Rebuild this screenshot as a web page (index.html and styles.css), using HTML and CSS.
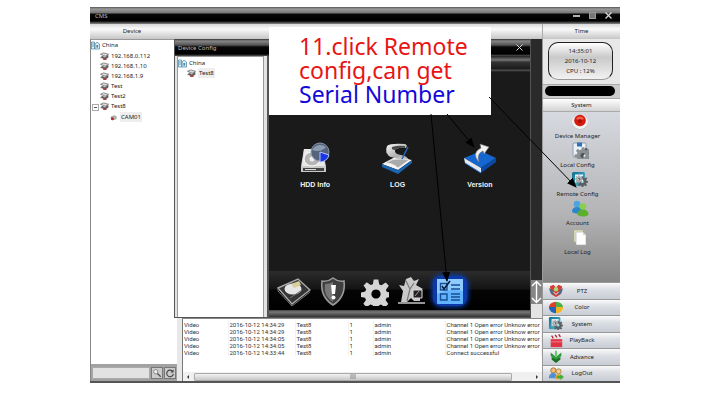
FILE: index.html
```html
<!DOCTYPE html>
<html lang="en">
<head>
    <meta charset="UTF-8">
    <meta name="viewport" content="width=device-width, initial-scale=1.0">
    <title>CMS</title>
    <link rel="stylesheet" href="styles.css">
</head>
<body>
    <!-- shared icons -->
    <svg class="defs" aria-hidden="true">
        <defs>
            <linearGradient id="metal" x1="0" y1="0" x2="1" y2="1">
                <stop offset="0" stop-color="#fafafa"/>
                <stop offset="1" stop-color="#8d8d8d"/>
            </linearGradient>
            <linearGradient id="teal" x1="0" y1="0" x2="1" y2="1">
                <stop offset="0" stop-color="#0c6c8e"/>
                <stop offset="1" stop-color="#5cc3d8"/>
            </linearGradient>
        </defs>
        <symbol id="i-dvr" viewBox="0 0 10 9">
            <path d="M0.5 2L4 0.5L9.5 2L6 4.2Z" fill="#ddd" stroke="#555" stroke-width="0.7"/>
            <path d="M2 4L5.5 5.5L9 3.2V5.6L5.5 7.6L2 6Z" fill="#666" stroke="#333" stroke-width="0.5"/>
            <path d="M0.5 5.8H3" stroke="#666"/>
            <rect x="3.6" y="6.6" width="3.6" height="1.8" fill="#b43a3a"/>
        </symbol>
        <symbol id="i-root" viewBox="0 0 9 9">
            <path d="M0.5 1H3.5V8H0.5ZM4 3L6 1.2L8.5 3V8H4Z" fill="#dff0f7" stroke="#4b8eae" stroke-width="0.8"/>
            <path d="M1.3 3H2.7M1.3 5H2.7M5.2 5H7.3M6.2 4V7" stroke="#27617e" stroke-width="0.8"/>
        </symbol>
        <symbol id="i-gear" viewBox="0 0 26 26">
            <path fill-rule="evenodd" d="M11 0.5h4l0.8 4.2 2 0.8L21.4 3l2.7 2.8-2.5 3.5 0.7 1.8 3.7 0.6v3.8l-3.8 0.8-0.9 2 2.4 3.4-2.9 2.8-3.5-2.4-1.8 0.8-0.8 3.6h-3.8l-0.7-3.7-2-0.8-3.4 2.4L2 21.5l2.3-3.4-0.8-1.9-3.5-0.7v-3.9l3.7-0.7 0.8-2L2.2 5.6 5 2.8l3.4 2.5 1.9-0.8zM13 9a4 4 0 1 0 0.01 0z"/>
        </symbol>
        <symbol id="i-sysconf" viewBox="0 0 18 17">
            <rect x="1" y="1" width="13" height="14" rx="1.5" fill="url(#teal)"/>
            <rect x="4" y="3.5" width="8" height="8" fill="#e6f5f9"/>
            <svg x="6" y="5" width="11" height="11"><use href="#i-gear" fill="#5b5f62"/></svg>
            <svg x="4" y="4" width="8" height="8"><use href="#i-gear" fill="#a8adb0"/></svg>
        </symbol>
        <marker id="tip" viewBox="0 0 10 8" refX="9" refY="4" markerWidth="10" markerHeight="8" markerUnits="userSpaceOnUse" orient="auto">
            <path d="M0 0L10 4L0 8Z"/>
        </marker>
    </svg>

    <div class="app">
        <header class="titlebar">
            <span class="app-name">CMS</span>
            <div class="window-btns">
                <button aria-label="Minimize"><svg viewBox="0 0 9 9"><path d="M1 5H8" stroke="#ddd" stroke-width="1.6"/></svg></button>
                <button aria-label="Maximize"><svg viewBox="0 0 9 9"><rect x="1.5" y="1.5" width="6" height="6" fill="#777" stroke="#999"/></svg></button>
                <button aria-label="Close"><svg viewBox="0 0 9 9"><path d="M1.5 1.5L7.5 7.5M7.5 1.5L1.5 7.5" stroke="#ddd" stroke-width="1.2"/></svg></button>
            </div>
        </header>

        <div class="headings">
            <h2>Device</h2>
            <h2>Time</h2>
        </div>

        <div class="body">
            <aside class="devices">
                <div class="tree-box">
                    <ul class="tree">
                        <li><span class="node"><svg><use href="#i-root"/></svg>China</span>
                            <ul>
                                <li><span class="node"><svg><use href="#i-dvr"/></svg>192.168.0.112</span></li>
                                <li><span class="node"><svg><use href="#i-dvr"/></svg>192.168.1.10</span></li>
                                <li><span class="node"><svg><use href="#i-dvr"/></svg>192.168.1.9</span></li>
                                <li><span class="node"><svg><use href="#i-dvr"/></svg>Test</span></li>
                                <li><span class="node"><svg><use href="#i-dvr"/></svg>Test2</span></li>
                                <li class="open"><span class="node"><svg><use href="#i-dvr"/></svg>Test8</span>
                                    <ul>
                                        <li><span class="node"><svg viewBox="0 0 10 9"><path d="M2 4L6 2.5L8 3.5L8 6L4 7Z" fill="#bbb" stroke="#777" stroke-width="0.6"/><circle cx="3.8" cy="5.8" r="1.7" fill="#b02a2a"/></svg><span class="selected">CAM01</span></span></li>
                                    </ul>
                                </li>
                            </ul>
                        </li>
                    </ul>
                </div>
                <div class="search">
                    <input type="text" aria-label="Search device">
                    <button aria-label="Search"><svg viewBox="0 0 12 12"><circle cx="4.5" cy="4.5" r="2.6" fill="#eee" stroke="#777"/><path d="M6.5 6.5L10.5 10.5" stroke="#555" stroke-width="1.6"/></svg></button>
                    <button aria-label="Refresh"><svg viewBox="0 0 12 12"><path d="M9.3 4.2A4 4 0 1 0 10 7" fill="none" stroke="#444" stroke-width="1.3"/><path d="M10.3 1.6V5.4H6.5Z" fill="#444"/></svg></button>
                </div>
            </aside>

            <main class="workspace">
                <div class="stage">
                    <section class="dialog">
                        <div class="dialog-title">
                            <span>Device Config</span>
                            <button aria-label="Close dialog"><svg viewBox="0 0 9 9"><path d="M1.5 1.5L7.5 7.5M7.5 1.5L1.5 7.5" stroke="#ddd"/></svg></button>
                        </div>
                        <div class="dialog-body">
                            <div class="dialog-tree">
                                <ul class="tree">
                                    <li><span class="node"><svg><use href="#i-root"/></svg>China</span>
                                        <ul>
                                            <li><span class="node"><svg><use href="#i-dvr"/></svg><span class="selected">Test8</span></span></li>
                                        </ul>
                                    </li>
                                </ul>
                            </div>
                            <div class="config">
                                <div class="config-head"></div>
                                <div class="config-items">
                                    <button>
                                        <svg viewBox="0 0 32 32">
                                            <path d="M5 7H23L27 24V30H2V24Z" fill="#c9c9c9"/>
                                            <path d="M5 7H23L26 24H3Z" fill="#e9e9e9"/>
                                            <ellipse cx="13" cy="17" rx="8" ry="7" fill="#b5b5b5" stroke="#fff"/>
                                            <circle cx="13" cy="17" r="2.5" fill="#eee"/>
                                            <path d="M4 26H25V29H4Z" fill="#444"/>
                                            <path d="M6 27.5H17" stroke="#ddd"/>
                                            <circle cx="21" cy="10" r="9" fill="#54647c" stroke="#8795a9"/>
                                            <path d="M13 8Q19 0 27 5Q22 11 13 8Z" fill="#8c9bb0"/>
                                            <path d="M21 10L30 13A9 9 0 0 1 21 20Z" fill="#1837e0" stroke="#b7c3ff"/>
                                        </svg>
                                        HDD Info
                                    </button>
                                    <button>
                                        <svg viewBox="0 0 32 32">
                                            <path d="M1 22L14 15L31 18L17 28Z" fill="#f4f4f4"/>
                                            <path d="M1 22L17 28L31 18V21L17 32L1 25Z" fill="#1c65b0"/>
                                            <path d="M6 5Q3 12 10 14L20 13Q26 14 28 18L17 25Q12 20 5 21Q8 17 17 17L11 15Q4 14 6 5Z" fill="#b9b9b9"/>
                                            <path d="M6 4Q9 1 24 2Q27 3 25 6Q17 5 14 8Q13 12 20 13Q12 17 8 14Q4 10 6 4Z" fill="url(#metal)"/>
                                            <path d="M11 5Q17 3 24 4L24 6Q17 5 14 8Q10 8 11 5Z" fill="#4b4b4b"/>
                                            <path d="M4 21Q12 16 20 17Q26 17 28 18L17 26Q12 21 4 21Z" fill="#aaa" stroke="#eee" stroke-width="0.8"/>
                                            <path d="M27 5L21 17" stroke="#2868b5" stroke-width="1.6"/>
                                        </svg>
                                        LOG
                                    </button>
                                    <button>
                                        <svg viewBox="0 0 32 32">
                                            <path d="M0 16L17 9L32 16L17 26Z" fill="#1566cf"/>
                                            <path d="M0 16L17 26V31L1 21Z" fill="#e5e9ee"/>
                                            <path d="M17 26L32 16V20L17 31Z" fill="#0b49a5"/>
                                            <path d="M1 21L17 31" stroke="#2277dd"/>
                                            <path d="M15 20Q7 11 17 6L16 2L25 5L20 12L19 9Q12 12 15 20Z" fill="#f2f2f2" stroke="#777" stroke-width="0.6"/>
                                        </svg>
                                        Version
                                    </button>
                                </div>
                                <nav class="config-tabs">
                                    <button aria-label="Storage">
                                        <svg viewBox="0 0 34 30">
                                            <path d="M1 12L21 3L33 14L15 28Z" fill="#353535" stroke="#aaa" stroke-width="1.4"/>
                                            <path d="M1 12V15L15 30L33 16" fill="none" stroke="#777"/>
                                            <ellipse cx="16" cy="13" rx="8.5" ry="5.5" fill="#e6e6e6"/>
                                            <path d="M14 8L22 5L24 9L17 12Z" fill="#d9cf9c"/>
                                            <path d="M13 22L25 14" stroke="#777"/>
                                        </svg>
                                    </button>
                                    <button aria-label="Alarm">
                                        <svg viewBox="0 0 34 30">
                                            <path d="M6 5Q12 6 17 2Q22 6 28 5Q30 21 17 29Q4 21 6 5Z" fill="#3f3f3f" stroke="#999" stroke-width="1.6"/>
                                            <path d="M9 8Q14 8 17 6V26Q7 20 9 8Z" fill="#777"/>
                                            <path d="M15 9H20L19 18H16Z" fill="#fff"/>
                                            <circle cx="17.5" cy="21.5" r="2" fill="#fff"/>
                                        </svg>
                                    </button>
                                    <button aria-label="Settings">
                                        <svg viewBox="0 0 34 30"><svg x="4" y="3" width="25" height="25"><use href="#i-gear" fill="#d5d5d5"/></svg></svg>
                                    </button>
                                    <button aria-label="Tools">
                                        <svg viewBox="0 0 34 30">
                                            <path d="M4 27H31" stroke="#bbb" stroke-width="1.6"/>
                                            <path d="M7 26L9 15L5 9L10 10L12 3L17 1L20 5L25 3L22 9L29 13L26 15V25H20L17 22L13 26Z" fill="#c9c9c9"/>
                                            <path d="M12 5L16 13L13 25M20 7L16 13" fill="none" stroke="#777" stroke-width="1.2"/>
                                            <path d="M19 14H28V22H19Z" fill="#222" stroke="#ddd"/>
                                            <path d="M21 20L25 15" stroke="#999"/>
                                        </svg>
                                    </button>
                                    <button class="active" aria-label="Information">
                                        <svg viewBox="0 0 34 30">
                                            <rect x="4" y="3" width="26" height="25" rx="1" fill="#62b3ff"/>
                                            <path d="M4 3H30V15Q16 12 4 18Z" fill="#8fcbff"/>
                                            <path d="M7.5 7.5H14V14H7.5ZM7.5 18H14V24H7.5Z" fill="none" stroke="#174f93" stroke-width="1.4"/>
                                            <path d="M9 10L11 13L17 5" fill="none" stroke="#0b1d3b" stroke-width="1.6"/>
                                            <path d="M18 9H27M18 13H27M18 18H27M18 21H27M18 24H27" stroke="#174f93" stroke-width="1.4"/>
                                        </svg>
                                    </button>
                                </nav>
                                <div class="config-foot"></div>
                            </div>
                        </div>
                    </section>
                    <div class="pager">
                        <button aria-label="Scroll up"><svg viewBox="0 0 11 12"><path d="M5.5 12V1.5M1 6L5.5 1.5L10 6" fill="none" stroke="#fff" stroke-width="1.4"/></svg></button>
                        <button aria-label="Scroll down"><svg viewBox="0 0 11 12"><path d="M5.5 0V10.5M1 6L5.5 10.5L10 6" fill="none" stroke="#fff" stroke-width="1.4"/></svg></button>
                        <div class="pager-end"></div>
                    </div>
                </div>

                <div class="log">
                    <table>
                        <colgroup><col class="c-type"><col class="c-time"><col class="c-device"><col class="c-channel"><col class="c-user"><col></colgroup>
                        <tbody>
                            <tr><td>Video</td><td>2016-10-12 14:34:29</td><td>Test8</td><td>1</td><td>admin</td><td>Channel 1 Open error Unknow error</td></tr>
                            <tr><td>Video</td><td>2016-10-12 14:34:29</td><td>Test8</td><td>1</td><td>admin</td><td>Channel 1 Open error Unknow error</td></tr>
                            <tr><td>Video</td><td>2016-10-12 14:34:05</td><td>Test8</td><td>1</td><td>admin</td><td>Channel 1 Open error Unknow error</td></tr>
                            <tr><td>Video</td><td>2016-10-12 14:34:05</td><td>Test8</td><td>1</td><td>admin</td><td>Channel 1 Open error Unknow error</td></tr>
                            <tr><td>Video</td><td>2016-10-12 14:33:44</td><td>Test8</td><td>1</td><td>admin</td><td>Connect successful</td></tr>
                        </tbody>
                    </table>
                    <div class="scrollbar">
                        <svg viewBox="0 0 4 6"><path d="M3 1L1 3L3 5Z" fill="#333"/></svg>
                        <div class="thumb"><svg viewBox="0 0 6 5"><path d="M1 0V5M3 0V5M5 0V5" stroke="#777" stroke-width="0.8"/></svg></div>
                        <svg viewBox="0 0 4 6"><path d="M1 1L3 3L1 5Z" fill="#333"/></svg>
                    </div>
                </div>
            </main>

            <aside class="side">
                <div class="clock-box">
                    <div class="clock">
                        <span>14:35:01</span>
                        <span>2016-10-12</span>
                        <span>CPU : 12%</span>
                    </div>
                </div>
                <div class="lamp"><div></div></div>
                <h2>System</h2>
                <div class="shortcuts">
                    <button>
                        <svg viewBox="0 0 18 17"><ellipse cx="9" cy="10.5" rx="8" ry="6" fill="#b8bcc0"/><ellipse cx="9" cy="9" rx="8" ry="7" fill="#f2f2f2"/><circle cx="9" cy="7.5" r="5.8" fill="#d41a0c"/><path d="M5 6A4.5 4.5 0 0 1 13 6Q9 8 5 6Z" fill="#f0604a"/><circle cx="9" cy="8" r="2" fill="#a80d05"/></svg>
                        Device Manager
                    </button>
                    <button>
                        <svg viewBox="0 0 18 17"><rect x="2" y="1" width="13" height="14" rx="1" fill="#eaf2f8" stroke="#8ca0b0"/><rect x="6" y="0.5" width="5" height="4" fill="#2f72b5"/><svg x="6" y="6" width="11" height="11"><use href="#i-gear" fill="#4e5356"/></svg><svg x="3" y="5" width="8" height="8"><use href="#i-gear" fill="#8b9093"/></svg></svg>
                        Local Config
                    </button>
                    <button>
                        <svg><use href="#i-sysconf"/></svg>
                        Remote Config
                    </button>
                    <button>
                        <svg viewBox="0 0 18 17"><circle cx="6" cy="4" r="3.3" fill="#4da5dd"/><path d="M1 12Q1 7 6 7Q11 7 11 12Q6 15 1 12Z" fill="#2c87c9"/><circle cx="12" cy="6.5" r="3.3" fill="#8ad04e"/><path d="M6.5 15Q6.5 9.5 12 9.5Q17.5 9.5 17.5 15Q12 18 6.5 15Z" fill="#5cb02d"/></svg>
                        Account
                    </button>
                    <button>
                        <svg viewBox="0 0 18 17"><path d="M3 1H12V13H3Z" fill="#e3e6c0" stroke="#a9ac88" stroke-width="0.6"/><path d="M5 3H12L15 6V16H5Z" fill="#fff" stroke="#aaa" stroke-width="0.6"/><path d="M12 3V6H15Z" fill="#d5d8b0"/></svg>
                        Local Log
                    </button>
                </div>
                <nav class="menu">
                    <button>
                        <svg viewBox="0 0 18 17"><path d="M2 4L6 2L9 5L12 2L16 4L14 13L9 16L4 13Z" fill="#d93b35"/><path d="M1 6L5 8L8 14L3 12ZM17 6L13 8L10 14L15 12Z" fill="#4f6a86"/><circle cx="9" cy="7" r="2.5" fill="#a8dc76"/><path d="M6 10L9 13L12 10" fill="none" stroke="#fff"/></svg>
                        <span>PTZ</span>
                    </button>
                    <button>
                        <svg viewBox="0 0 18 17"><path d="M9 8V2A8 6.5 0 0 1 17 8Z" fill="#4db044"/><path d="M9 8H17A8 6.5 0 0 1 9 15Z" fill="#f5b51e"/><path d="M9 8V15A8 6.5 0 0 1 1 8Z" fill="#2464bb"/><path d="M9 8H1A8 6.5 0 0 1 9 2Z" fill="#e0402a"/></svg>
                        <span>Color</span>
                    </button>
                    <button>
                        <svg><use href="#i-sysconf"/></svg>
                        <span>System</span>
                    </button>
                    <button>
                        <svg viewBox="0 0 18 17"><rect x="3" y="7" width="13" height="9" fill="#e03444"/><path d="M3 10H16" stroke="#f58b92"/><path d="M2 3L15 1L16 4L3 6.5Z" fill="#eee"/><path d="M4 3L6 6M8 2L10 5M12 1.5L14 4.5" stroke="#b51f2d" stroke-width="1.5"/></svg>
                        <span>PlayBack</span>
                    </button>
                    <button>
                        <svg viewBox="0 0 18 17"><path d="M3 4L9 9L15 4V8L9 13L3 8Z" fill="#2c9b36"/><path d="M4 9L9 12L14 9V12L9 16L4 12Z" fill="#1a6f27"/><path d="M8 2H10V8H8Z" fill="#57c45a"/></svg>
                        <span>Advance</span>
                    </button>
                    <button>
                        <svg viewBox="0 0 18 17"><circle cx="6" cy="5" r="3" fill="#f0bb77" stroke="#8a5a1e" stroke-width="0.8"/><path d="M1 14Q1 8 6 8Q10 8 10 14Z" fill="#4e8fd0"/><circle cx="12" cy="6" r="2.8" fill="#f5cf92" stroke="#a06c22" stroke-width="0.8"/><path d="M8 15Q8 9 12 9Q16 9 16 15Z" fill="#e2a838"/><path d="M10 11H14V9L18 12.5L14 16V14H10Z" fill="#3fae3b"/></svg>
                        <span>LogOut</span>
                    </button>
                </nav>
            </aside>
        </div>

        <div class="callout">11.click Remote<br>config,can get<br><em>Serial Number</em></div>
        <svg class="arrows" viewBox="0 0 530 376" aria-hidden="true">
            <path d="M357 107L384 140" marker-end="url(#tip)"/>
            <path d="M341 107L357 274" marker-end="url(#tip)"/>
            <path d="M399 90L486 180" marker-end="url(#tip)"/>
        </svg>
    </div>
</body>
</html>
```
FILE: styles.css
```css
* {
    margin: 0;
    padding: 0;
    box-sizing: border-box;
}

body {
    font-family: "Noto Sans", "Open Sans", sans-serif;
    font-size: 6px;
    line-height: 10px;
    color: #222;
    background: white;
    min-height: 100vh;
    padding: 7px 100px 32px 90px;
    display: flex;
}

button {
    border: none;
    background: none;
    font: inherit;
    color: inherit;
    cursor: pointer;
}

svg {
    display: block;
    flex: none;
}

ul {
    list-style: none;
}

h2 {
    font-size: 6px;
    font-weight: 400;
    text-align: center;
}

.defs {
    position: absolute;
    width: 0;
    height: 0;
}

.app {
    position: relative;
    flex: 1;
    display: flex;
    flex-direction: column;
    background: #e8e8e8;
    border-bottom: 2px solid #555;
}

/* title bar */
.titlebar {
    height: 17px;
    padding: 0 7px 0 5px;
    display: flex;
    justify-content: space-between;
    align-items: center;
    background: linear-gradient(#555 0, #999 2px, #777 6px, #080808 7px, #000 14px, #333 15px, #888 17px);
    color: #bbb;
}

.window-btns {
    display: flex;
    gap: 7px;
}

.window-btns svg,
.dialog-title svg {
    width: 9px;
    height: 9px;
}

.headings {
    display: grid;
    grid-template-columns: 84px 78px;
    justify-content: space-between;
    background: linear-gradient(#d8d8d8, #fafafa 5px, #c6c6c6);
    line-height: 15px;
}

.headings h2:last-child {
    border-left: 1px solid #aaa;
}

.body {
    flex: 1;
    display: grid;
    grid-template-columns: 87px 1fr 78px;
}

/* device list */
.devices {
    display: flex;
    flex-direction: column;
    background: #a2a2a2;
    border-left: 1px solid #888;
}

.tree-box {
    flex: 1;
    background: white;
    border-top: 1px solid #999;
}

.tree ul {
    padding: 1px 0 0 9px;
}

.tree li {
    position: relative;
}

.node {
    display: flex;
    align-items: center;
    gap: 2px;
}

.node svg {
    width: 9px;
    height: 9px;
}

.node .selected {
    background: #eee;
    padding: 0 1px;
}

.open::before {
    content: "";
    position: absolute;
    left: -8px;
    top: 3px;
    width: 5px;
    height: 5px;
    border: 1px solid #aaa;
    background: linear-gradient(#555, #555) center / 3px 1px no-repeat;
}

.search {
    height: 17px;
    padding: 3px 1px 2px;
    display: flex;
    gap: 1px;
}

.search input {
    flex: 1;
    min-width: 0;
    border: 1px solid #aaa;
    background: #e2e2e2;
}

.search button {
    width: 12px;
    background: #ccc;
    border: 1px solid #777;
}

.search svg {
    width: 10px;
    height: 10px;
}

/* workspace */
.workspace {
    min-width: 0;
    display: flex;
    flex-direction: column;
}

.stage {
    flex: 1;
    display: flex;
    background: #1f1f1f;
}

.dialog {
    position: relative;
    flex: 1;
    margin-left: -3px;
    display: flex;
    flex-direction: column;
    background: #e3e3e3;
    border: 1px solid #555;
    border-top: none;
}

.dialog-title {
    height: 17px;
    padding: 0 6px 0 3px;
    display: flex;
    justify-content: space-between;
    align-items: center;
    background: linear-gradient(#333 0, #888 2px, #555 6px, #080808 8px, #000 15px, #555);
    color: #bbb;
}

.dialog-body {
    flex: 1;
    display: grid;
    grid-template-columns: 87px 1fr;
    gap: 3px;
    padding-left: 2px;
}

.dialog-tree {
    background: white;
    border: 1px solid #999;
    border-bottom: none;
    padding-top: 1px;
}

.dialog-tree .tree ul {
    padding-top: 0;
}

.config {
    display: flex;
    flex-direction: column;
    background: #1a1a1a;
    border-left: 2px solid #555;
}

.config-head {
    height: 16px;
    background: linear-gradient(#222 0, #777 4px, #333 6px, #1a1a1a 13px, #555 14px, #1a1a1a);
}

.config-items {
    flex: 1;
    padding: 70px 9px 0 5px;
    display: grid;
    grid-template-columns: repeat(3, 1fr);
    align-items: start;
}

.config-items button {
    display: flex;
    flex-direction: column;
    align-items: center;
    gap: 6px;
    font: bold 7px/10px "Liberation Sans", Arial, sans-serif;
    color: #f2f2f2;
}

.config-items svg {
    width: 32px;
    height: 32px;
}

.config-tabs {
    height: 39px;
    padding: 0 8px;
    display: flex;
    align-items: center;
    gap: 5px;
    background: linear-gradient(#2c2c2c, #151515 45%, #050505 50%, #000);
}

.config-tabs svg {
    width: 34px;
    height: 30px;
}

.config-tabs .active {
    border-radius: 8px;
    background: #0b39a8;
    box-shadow: 0 0 5px 1px #0d41b8;
}

.config-foot {
    height: 7px;
    background: linear-gradient(#444, #777 2px, #333);
}

.pager {
    width: 11px;
    display: flex;
    flex-direction: column;
    justify-content: flex-end;
    background: #2a2a2a;
}

.pager button {
    height: 12px;
    background: #858585;
}

.pager svg {
    width: 11px;
    height: 12px;
}

.pager-end {
    height: 14px;
    background: #e4e4e4;
}

/* event log */
.log {
    margin-left: 5px;
    height: 63px;
    display: flex;
    flex-direction: column;
    justify-content: space-between;
    background: white;
    border-left: 1px solid #777;
    border-top: 1px solid #888;
}

.log table {
    width: 100%;
    margin-top: 2px;
    table-layout: fixed;
    border-collapse: collapse;
    font: 6px/7px Roboto, Arial, sans-serif;
    color: #333;
}

.log td {
    padding: 0 0 0 1px;
    border-right: 1px solid #f2f2f2;
    white-space: nowrap;
}

.c-type { width: 45px; }
.c-time { width: 67px; }
.c-device { width: 53px; }
.c-channel { width: 25px; }
.c-user { width: 72px; }

.scrollbar {
    height: 9px;
    padding: 0 3px;
    display: flex;
    align-items: center;
    gap: 4px;
    background: #f0f0f0;
}

.scrollbar > svg {
    width: 4px;
    height: 6px;
}

.thumb {
    flex: 1;
    height: 8px;
    margin-right: 19px;
    display: flex;
    align-items: center;
    justify-content: center;
    border: 1px solid #aaa;
    border-radius: 1px;
    background: linear-gradient(#f2f2f2, #c8c8c8);
}

.thumb svg {
    width: 6px;
    height: 5px;
}

/* right column */
.side {
    display: flex;
    flex-direction: column;
    border-left: 1px solid #999;
    background: #d8d8d8;
}

.clock-box {
    padding: 3px 7px 4px 5px;
    background: #e8e8e8;
    border-bottom: 1px solid #aaa;
}

.clock {
    height: 38px;
    display: flex;
    flex-direction: column;
    justify-content: center;
    text-align: center;
    border: 1px solid #222;
    border-bottom-color: #999;
    border-radius: 10px;
    background: linear-gradient(#fff, #c9c9c9 40%, #f2f2f2);
}

.lamp {
    padding: 1px 5px 2px 2px;
    background: #ccc;
}

.lamp div {
    height: 10px;
    border-radius: 5px;
    background: black;
}

.side h2 {
    line-height: 12px;
    border-top: 1px solid #aaa;
    border-bottom: 1px solid #aaa;
    background: linear-gradient(#fff, #d3d3d3);
}

.shortcuts {
    flex: 1;
    padding: 1px 8px 0 0;
    display: flex;
    flex-direction: column;
    background: linear-gradient(#d6d9df, #b4b4b6 60%, #858585);
}

.shortcuts button {
    display: flex;
    flex-direction: column;
    align-items: center;
    line-height: 12px;
}

.shortcuts svg,
.menu svg {
    width: 18px;
    height: 17px;
}

.shortcuts svg {
    margin-left: 5px;
}

.menu {
    height: 99px;
    display: flex;
    flex-direction: column;
}

.menu button {
    flex: 1;
    display: grid;
    grid-template-columns: 25px 28px;
    align-items: center;
    border-top: 1px solid #999;
    background: linear-gradient(#fafafa, #dcdfe4 40%, #c8ccd4);
}

.menu svg {
    height: 15px;
    margin-left: 4px;
}

.menu span {
    white-space: nowrap;
    display: flex;
    justify-content: center;
}

/* note on top of the window */
.callout {
    position: absolute;
    left: 179px;
    top: 20px;
    width: 222px;
    height: 88px;
    padding: 7px 0 0 30px;
    background: white;
    color: #e81414;
    font-size: 23px;
    line-height: 24px;
    white-space: nowrap;
}

.callout em {
    font-style: normal;
    color: #1408d8;
}

.arrows {
    position: absolute;
    left: 0;
    top: 0;
    width: 530px;
    height: 376px;
    pointer-events: none;
    stroke: black;
    fill: black;
}
```
